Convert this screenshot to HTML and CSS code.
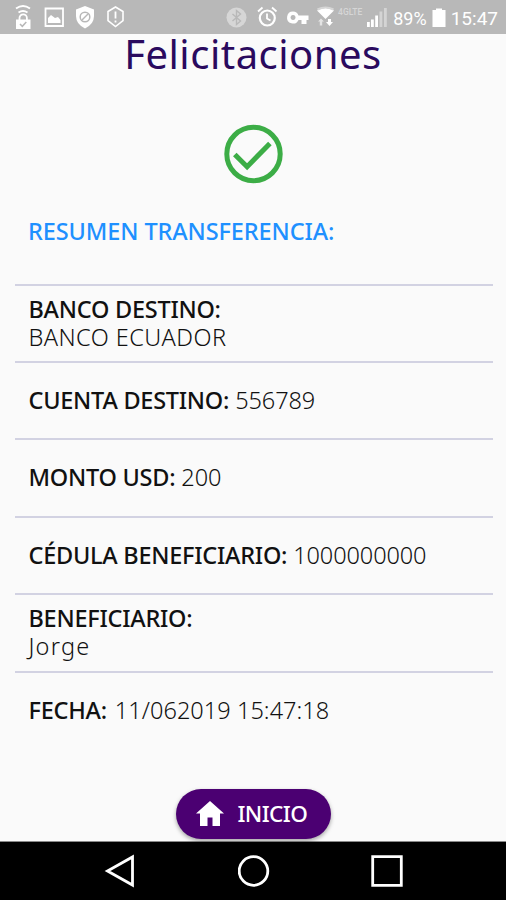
FILE: index.html
```
<!DOCTYPE html>
<html lang="es">

<head>
	<meta charset="utf-8">
	<title>Felicitaciones</title>
	<link rel="stylesheet" href="styles.css">
</head>

<body>
	<div class="status-bar">
		<svg class="status-icons" width="506" height="34" viewBox="0 0 506 34" fill="none" stroke="#fff" stroke-width="1.8">
			<!-- wifi lock -->
			<path d="M16 8.500Q23 3.500 30 8.500M18.500 12.500Q23 9.500 27.500 12.500M19.500 20v-2a3.700 3.700 0 0 1 7.400 0v2" />
			<path d="M16 19.500h14.500v9.500h-14.500z" fill="#fff" stroke="none" />
			<path d="M20 24l2.300 2.300 4-4.300" stroke="#b8b8b8" stroke-width="1.500" />
			<!-- picture -->
			<path d="M45.500 8.500h17.500v17.500h-17.500z" />
			<path d="M48 23v-5l3-3 4 3 3-1 2.500 3v3z" fill="#fff" stroke="none" />
			<!-- shield -->
			<path d="M85 6l9 3.500v6.500q0 8-9 12.500q-9-4.500-9-12.500v-6.500z" fill="#fff" stroke="none" />
			<circle cx="85" cy="17" r="4.800" stroke="#b8b8b8" stroke-width="1.500" />
			<path d="M82 20l6-6" stroke="#b8b8b8" stroke-width="1.500" />
			<!-- warning -->
			<path d="M115.500 7l7.500 4.500v9l-7.500 6-7.500-6v-9z" stroke-width="1.600" />
			<path d="M115.500 11.500v7M115.500 20.500v2" />
			<!-- bluetooth -->
			<circle cx="236.500" cy="17.500" r="10" fill="#d6d6d6" stroke="none" />
			<path d="M232.500 14l8 7-4 3.500v-14l4 3.500-8 7" stroke="#b8b8b8" stroke-width="1.400" />
			<!-- alarm -->
			<circle cx="267.300" cy="18" r="7.500" stroke-width="2.200" />
			<path d="M267 13.500v5l3.500 2M258 11.500l4.500-4M276.500 11.500l-4.500-4" />
			<!-- vpn key -->
			<path fill-rule="evenodd" d="M293 11.500a6 6 0 0 1 5.500 4h10v4.500h-2v4h-5v-4h-3a6 6 0 1 1-5.500-8.500zM293 15a2.500 2.500 0 1 0 .1 0z" fill="#fff" stroke="none" />
			<!-- wifi -->
			<path d="M317 10.500q8.500-5 17 0l-8.500 8.500z" fill="#fff" stroke="none" />
			<path d="M317.500 9.500q8-4 16 0" stroke="#d6d6d6" stroke-width="2" />
			<path d="M318 21.500l3-3 3 3h-1.800v4h-2.400v-4z" fill="#e4e4e4" stroke="none" />
			<path d="M326 22l3.500 4 3.500-4h-2v-3h-3v3z" fill="#fff" stroke="none" />
			<!-- signal -->
			<g fill="#fff" stroke="none">
				<path d="M367 22h2.800v5h-2.800zM371 19.500h2.800v7.500h-2.800zM375.200 15.500h2.800v11.500h-2.800z" />
				<path d="M379.500 11.500h2.800v15.500h-2.800zM384 8h2.800v19h-2.800z" opacity=".4" />
				<!-- battery -->
				<path d="M436 8.500h6v1.500h3.500v17h-13v-17h3.500z" />
			</g>
		</svg>
		<span class="network">4GLTE</span>
		<span class="battery">89%</span>
		<span class="clock">15:47</span>
	</div>

	<div class="content">
		<h1 class="title">Felicitaciones</h1>
		<svg class="check" width="60" height="60" viewBox="0 0 60 60" fill="none" stroke="#3cad46">
			<circle cx="30.500" cy="30" r="26.700" stroke-width="5" />
			<path d="M11.800 30.500l12.300 12.200 22.800-23.200" stroke-width="5" />
		</svg>
		<h2 class="subtitle">RESUMEN TRANSFERENCIA:</h2>

		<div class="summary">
			<div class="row">
				<div class="label">BANCO DESTINO:</div>
				<div class="value bank">BANCO ECUADOR</div>
			</div>
			<div class="row inline">
				<span class="label">CUENTA DESTINO:</span>
				<span class="value">556789</span>
			</div>
			<div class="row inline">
				<span class="label">MONTO USD:</span>
				<span class="value">200</span>
			</div>
			<div class="row inline">
				<span class="label">CÉDULA BENEFICIARIO:</span>
				<span class="value">1000000000</span>
			</div>
			<div class="row">
				<div class="label">BENEFICIARIO:</div>
				<div class="value name">Jorge</div>
			</div>
			<div class="row inline">
				<span class="label">FECHA:</span>
				<span class="value date">11/062019 15:47:18</span>
			</div>
		</div>

		<button class="home-button">
			<svg width="28" height="25" viewBox="0 0 28 25" fill="#fff">
				<path d="M14 0l14 12.500h-4v12.500h-7.500v-8.500h-5v8.500h-7.500v-12.500h-4z" />
			</svg>
			<span>INICIO</span>
		</button>
	</div>

	<div class="nav-bar">
		<svg width="32" height="34" viewBox="0 0 32 34"><path d="M28.500 3v28l-25-14z" /></svg>
		<svg width="32" height="34" viewBox="0 0 32 34"><circle cx="15.500" cy="17" r="14.300" /></svg>
		<svg width="32" height="34" viewBox="0 0 32 34"><path d="M1.700 2.700h28.600v28.600h-28.600z" /></svg>
	</div>
</body>

</html>
```
FILE: styles.css
```
body {
	margin: 0;
	height: 900px;
	display: flex;
	flex-direction: column;
	overflow: hidden;
	background-color: #fafafa;
	font-family: "Noto Sans", sans-serif;
	color: #111;
}

.status-bar {
	position: relative;
	box-sizing: border-box;
	height: 34px;
	flex: none;
	display: flex;
	justify-content: flex-end;
	align-items: center;
	padding: 3px 8px 0 0;
	background-color: #b8b8b8;
	color: #fff;
	font-family: Roboto, sans-serif;
	font-size: 19px;
}

.status-icons {
	position: absolute;
	left: 0;
	top: 0;
}

.network {
	margin: -13px 31px 0 0;
	font-size: 8.5px;
	font-weight: 500;
	color: #d6d6d6;
}

.battery {
	font-size: 18px;
	margin-right: 24px;
}

.content {
	height: 807px;
	flex: none;
	display: flex;
	flex-direction: column;
	align-items: center;
	border-bottom: 1px solid #8a8a8a;
}

.title {
	margin: 0;
	height: 90px;
	line-height: 39px;
	font-size: 40px;
	font-weight: 400;
	letter-spacing: 0.5px;
	color: #2a0a5e;
}

.check {
	flex: none;
}

.subtitle {
	align-self: flex-start;
	margin: 31px 0 0 28px;
	height: 68.6px;
	line-height: 32px;
	font-size: 23.5px;
	font-weight: 500;
	letter-spacing: -0.1px;
	color: #1e90ff;
}

.summary {
	width: 478px;
	margin-left: 1px;
}

.row {
	box-sizing: border-box;
	height: 77.4px;
	padding: 9px 0 0 14px;
	border-top: 2px solid #d2d2e2;
	line-height: 28px;
	font-size: 23.5px;
	white-space: nowrap;
}

.inline {
	display: flex;
	gap: 6px;
	padding-top: 23px;
}

.label {
	font-weight: 500;
	letter-spacing: -0.25px;
	color: #111;
}

.value {
	font-weight: 300;
	letter-spacing: -0.1px;
	color: #111;
}

.bank {
	letter-spacing: 0.45px;
}

.name {
	letter-spacing: 1.2px;
}

.date {
	padding-left: 2px;
	letter-spacing: 0.05px;
}

.home-button {
	box-sizing: border-box;
	width: 155px;
	height: 50px;
	margin-top: 41px;
	padding: 0 0 0 20px;
	display: flex;
	align-items: center;
	gap: 14px;
	border: 0;
	border-radius: 25px;
	background-color: #4b0072;
	box-shadow: 0 2px 4px rgba(0, 0, 0, 0.35);
	color: #fff;
	font-family: inherit;
	font-size: 22.5px;
	font-weight: 500;
	letter-spacing: -0.6px;
}

.nav-bar {
	box-sizing: border-box;
	flex: 1;
	display: flex;
	justify-content: space-between;
	align-items: center;
	padding: 0 103px 0 104px;
	background-color: #000;
}

.nav-bar svg {
	fill: none;
	stroke: #fff;
	stroke-width: 2.800;
}
```
